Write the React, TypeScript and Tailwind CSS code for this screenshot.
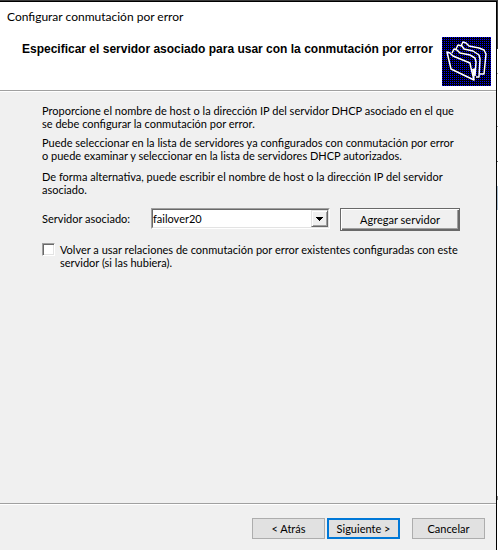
import type { ReactNode } from "react";

function FoldersIcon() {
  return (
    <svg width="49" height="49" viewBox="0 0 49 49" className="shrink-0" aria-hidden="true">
      <defs>
        <pattern id="dither" width="2" height="2" patternUnits="userSpaceOnUse" shapeRendering="crispEdges">
          <rect width="2" height="2" fill="#000000" />
          <rect width="1" height="1" fill="#0000ff" />
        </pattern>
      </defs>
      <rect width="49" height="49" fill="url(#dither)" />
      <g fill="none" stroke="#ffffff" strokeWidth="1.5" strokeLinejoin="round">
        <path d="M19 9L21 5L24 6L27 9L37 11L42 13L44 17L42 37L38 37" />
        <path d="M14 12L16 8L20 9L22 12L31 14L37 18L38 22L37 40L34 40" />
        <path d="M10 16L12 12L15 13L18 16L28 18L33 21L34 25L33 39" />
        <path d="M5 15L8 16L11 19L28 26L29 31L32 43L9 32Z" />
        <path d="M30 32L34 31L32 43Z" fill="#ffffff" stroke="none" />
      </g>
    </svg>
  );
}

function WizardButton({ children, primary = false }: { children: ReactNode; primary?: boolean }) {
  return (
    <button
      type="button"
      className={
        primary
          ? "h-[21px] w-[73px] border-2 border-[#0078d7] bg-[#e1e1e1] text-center leading-4"
          : "h-[21px] w-[73px] border border-[#adadad] bg-[#e1e1e1] text-center leading-4"
      }
    >
      {children}
    </button>
  );
}

export default function App() {
  return (
    <div className="flex min-h-screen flex-col bg-[#f0f0f0] font-[Lato,'Liberation_Sans',sans-serif] text-[11px] leading-[13px] text-black">
      <div className="h-px bg-[#3a3a3a]" />
      <div className="flex grow">
        <main className="flex grow flex-col border-t border-r border-black">
          <header className="border-b border-[#a0a0a0] bg-white">
            <h1 className="px-[7px] pt-[7px] text-[12px] leading-4">
              Configurar conmutación por error
            </h1>
            <div className="flex justify-between pt-3 pr-[5px] pb-1 pl-[22px]">
              <h2 className="pt-[6px] font-['Liberation_Sans',Arial,sans-serif] text-[12px] font-bold">
                Especificar el servidor asociado para usar con la conmutación por error
              </h2>
              <FoldersIcon />
            </div>
          </header>

          <section className="grow border-t border-white pt-3 pr-8 pl-[42px]">
            <p>
              Proporcione el nombre de host o la dirección IP del servidor DHCP asociado en el que
              <br />
              se debe configurar la conmutación por error.
            </p>
            <p className="mt-[6px]">
              Puede seleccionar en la lista de servidores ya configurados con conmutación por error
              <br />o puede examinar y seleccionar en la lista de servidores DHCP autorizados.
            </p>
            <p className="mt-2">
              De forma alternativa, puede escribir el nombre de host o la dirección IP del servidor
              <br />
              asociado.
            </p>

            <div className="mt-3 flex">
              <label htmlFor="partner" className="w-[109px] shrink-0 pt-1">
                Servidor asociado:
              </label>
              <div className="relative h-[21px] w-[179px] border border-t-[#a0a0a0] border-r-white border-b-white border-l-[#a0a0a0]">
                <select
                  id="partner"
                  className="block h-[19px] w-full appearance-none border border-t-[#696969] border-r-[#e3e3e3] border-b-[#e3e3e3] border-l-[#696969] bg-white outline-none"
                >
                  <option>failover20</option>
                </select>
                <span className="pointer-events-none absolute top-px right-px flex h-[17px] w-[17px] items-center justify-center border border-t-[#e3e3e3] border-r-[#696969] border-b-[#696969] border-l-[#e3e3e3] bg-[#f0f0f0] shadow-[inset_1px_1px_#fff,inset_-1px_-1px_#a0a0a0]">
                  <svg width="7" height="4" viewBox="0 0 7 4" shapeRendering="crispEdges" aria-hidden="true">
                    <path d="M0 0H7V1H6V2H5V3H4V4H3V3H2V2H1V1H0Z" />
                  </svg>
                </span>
              </div>
              <button
                type="button"
                className="ml-[10px] h-[23px] w-[120px] border border-[#696969] bg-[#f0f0f0] text-center shadow-[inset_1px_1px_#fff,inset_-1px_-1px_#696969,inset_-2px_-2px_#a0a0a0]"
              >
                Agregar servidor
              </button>
            </div>

            <div className="mt-3 flex gap-[5px]">
              <input
                id="reuse"
                type="checkbox"
                className="h-[13px] w-[13px] shrink-0 appearance-none border border-t-[#a0a0a0] border-r-white border-b-white border-l-[#a0a0a0] bg-white shadow-[inset_1px_1px_#696969,inset_-1px_-1px_#e3e3e3] checked:bg-[#0078d7]"
              />
              <label htmlFor="reuse">
                Volver a usar relaciones de conmutación por error existentes configuradas con este
                <br />
                servidor (si las hubiera).
              </label>
            </div>
          </section>

          <footer className="border-t border-[#a0a0a0]">
            <div className="flex justify-end gap-[2px] border-t border-white pt-[13px] pr-[11px] pb-[11px]">
              <WizardButton>&lt; Atrás</WizardButton>
              <WizardButton primary>Siguiente &gt;</WizardButton>
              <span className="w-2" />
              <WizardButton>Cancelar</WizardButton>
            </div>
          </footer>
        </main>
        <div className="flex w-px flex-col bg-white">
          <div className="h-12 bg-[#3a3a3a]" />
          <div className="mt-6 h-px bg-[#a0a0a0]" />
          <div className="mt-[52px] h-px bg-[#a0a0a0]" />
          <div className="mt-[34px] h-px bg-[#696969]" />
          <div className="mt-6 h-6 bg-[#a9bdcf]" />
          <div className="mt-[286px] h-1 bg-[#888888]" />
        </div>
      </div>
    </div>
  );
}
